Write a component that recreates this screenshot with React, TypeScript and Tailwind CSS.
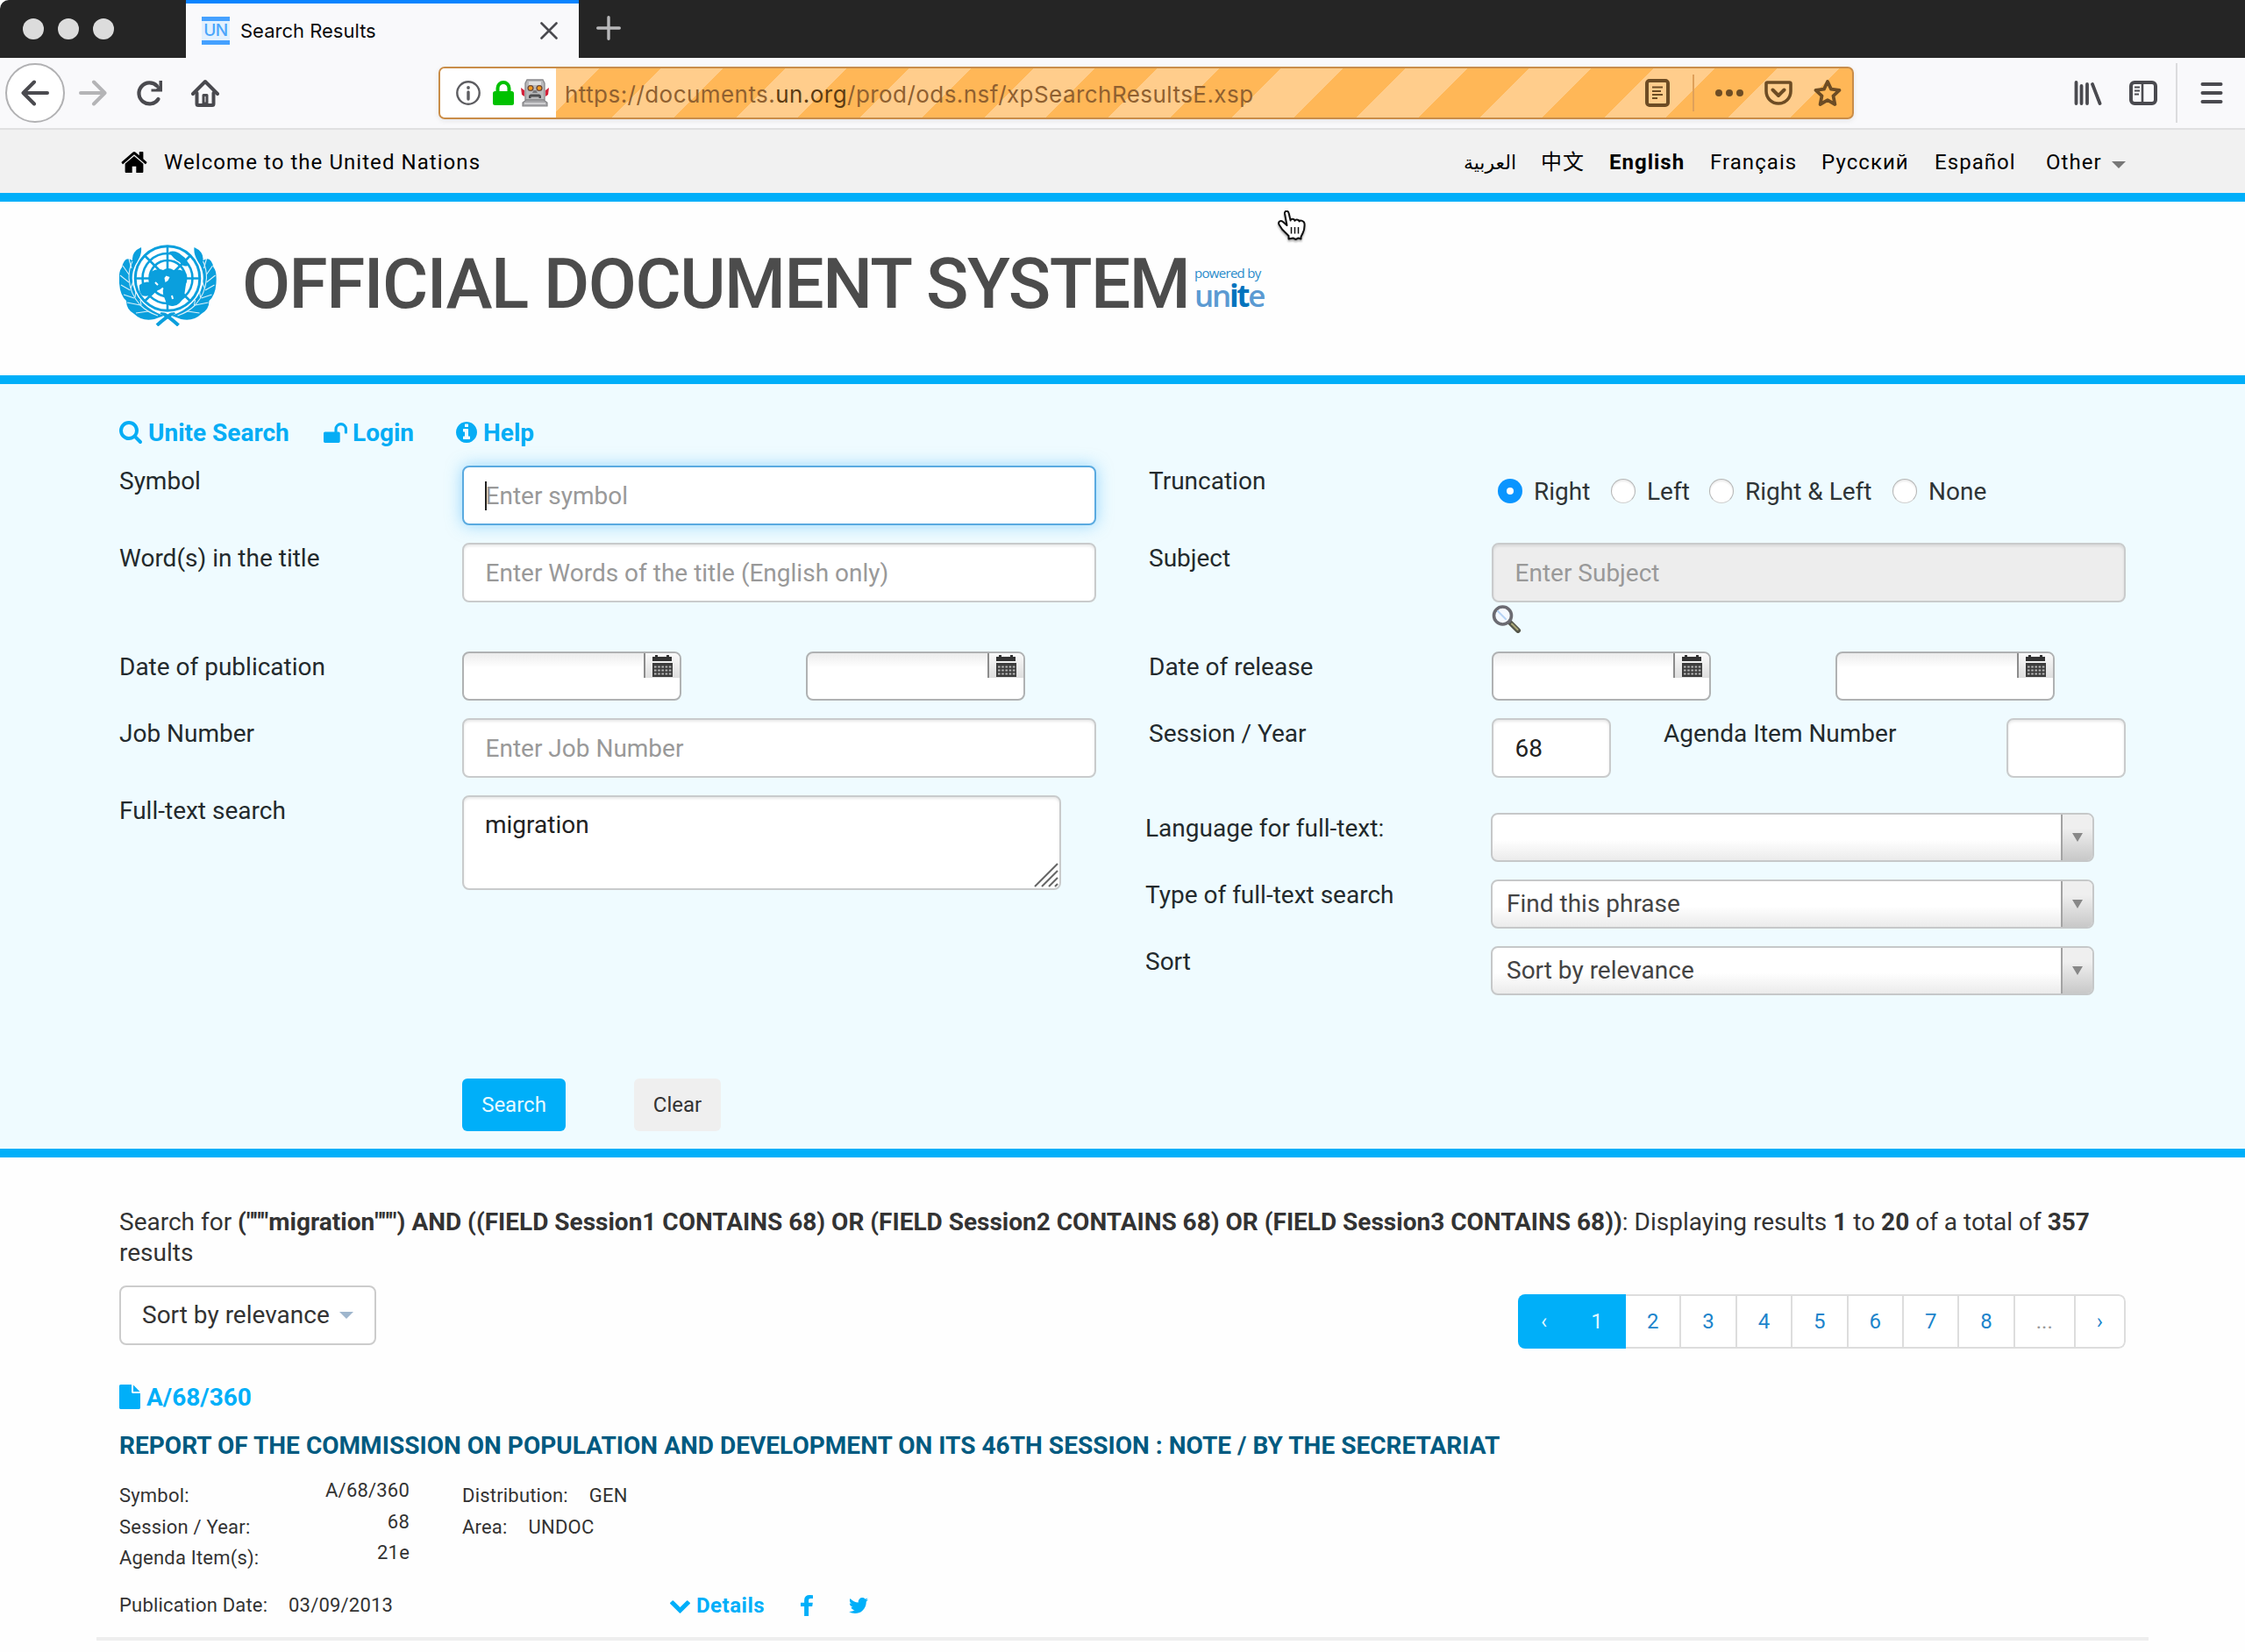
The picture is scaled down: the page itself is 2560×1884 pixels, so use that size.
import React from "react";

const P = {
  home: "M1472 992v480q0 26-19 45t-45 19h-384v-384h-256v384h-384q-26 0-45-19t-19-45v-480q0-1 .5-3t.5-3l575-474 575 474q1 2 1 6zm223-69l-62 74q-8 9-21 11h-3q-13 0-21-7l-692-577-692 577q-12 8-24 7-13-2-21-11l-62-74q-8-10-7-23.5t11-21.5l719-599q32-26 76-26t76 26l244 204v-195q0-14 9-23t23-9h192q14 0 23 9t9 23v408l219 182q10 8 11 21.5t-7 23.5z",
  search: "M1216 832q0-185-131.5-316.5t-316.5-131.5-316.5 131.5-131.5 316.5 131.5 316.5 316.5 131.5 316.5-131.5 131.5-316.5zm512 832q0 52-38 90t-90 38q-54 0-90-38l-343-342q-179 124-399 124-143 0-273.5-55.5t-225-150-150-225-55.5-273.5 55.5-273.5 150-225 225-150 273.5-55.5 273.5 55.5 225 150 150 225 55.5 273.5q0 220-124 399l343 343q37 37 37 90z",
  unlock: "M1728 576v256q0 26-19 45t-45 19h-64q-26 0-45-19t-19-45v-256q0-106-75-181t-181-75-181 75-75 181v192h96q40 0 68 28t28 68v576q0 40-28 68t-68 28h-960q-40 0-68-28t-28-68v-576q0-40 28-68t68-28h672v-192q0-185 131.5-316.5t316.5-131.5 316.5 131.5 131.5 316.5z",
  info: "M1152 1376v-160q0-14-9-23t-23-9h-96v-512q0-14-9-23t-23-9h-320q-14 0-23 9t-9 23v160q0 14 9 23t23 9h96v320h-96q-14 0-23 9t-9 23v160q0 14 9 23t23 9h448q14 0 23-9t9-23zm-128-896v-160q0-14-9-23t-23-9h-192q-14 0-23 9t-9 23v160q0 14 9 23t23 9h192q14 0 23-9t9-23zm640 416q0 209-103 385.5t-279.5 279.5-385.5 103-385.5-103-279.5-279.5-103-385.5 103-385.5 279.5-279.5 385.5-103 385.5 103 279.5 279.5 103 385.5z",
  chevron: "M1683 808l-742 741q-19 19-45 19t-45-19l-742-741q-19-19-19-45.5t19-45.5l166-165q19-19 45-19t45 19l531 531 531-531q19-19 45-19t45 19l166 165q19 19 19 45.5t-19 45.5z",
  facebook: "M1343 12v264h-157q-86 0-116 36t-30 108v189h293l-39 296h-254v759h-306v-759h-255v-296h255v-218q0-186 104-288.5t277-102.5q147 0 228 12z",
  twitter: "M1684 408q-67 98-162 167 1 14 1 42 0 130-38 259.5t-115.5 248.5-184.5 210.5-258 146-323 54.5q-271 0-496-145 35 4 78 4 225 0 401-138-105-2-188-64.5t-114-159.5q33 5 61 5 43 0 85-11-112-23-185.5-111.5t-73.5-205.5v-4q68 38 146 41-66-44-105-115t-39-154q0-88 44-163 121 149 294.5 238.5t371.5 99.5q-8-38-8-74 0-134 94.5-228.5t228.5-94.5q140 0 236 102 109-21 205-78-37 115-142 178 93-10 186-50z",
  file: "M1152 512v-472q22 14 36 28l408 408q14 14 28 36h-472zm-128 32q0 40 28 68t68 28h544v1056q0 40-28 68t-68 28h-1344q-40 0-68-28t-28-68v-1600q0-40 28-68t68-28h800v544z",
};

function Fa({ d, vb, className }: { d: string; vb: string; className: string }) {
  return (
    <svg viewBox={vb} className={"shrink-0 fill-current " + className} preserveAspectRatio="none">
      <path d={d} />
    </svg>
  );
}

function TabStrip() {
  return (
    <div className="flex h-[66px] rounded-tl-[10px] bg-[#252525]">
      <div className="flex w-[212px] items-center gap-4 pl-[26px]">
        {[0, 1, 2].map((i) => (
          <span key={i} className="size-6 rounded-full bg-[#dcdcdc]" />
        ))}
      </div>
      <div className="flex w-[448px] items-center border-t-4 border-t-[#0a84ff] bg-[#f9f9fb] pl-[18px]">
        <div className="flex h-8 w-8 flex-col items-center justify-center border-y-[5px] border-[#45a1ff] bg-[#e2f1fe] text-[19px] leading-[22px] font-medium text-[#4aa5fb] [font-family:Inter,sans-serif]">
          <span className="tracking-[-0.5px]">UN</span>
        </div>
        <span className="ml-3 w-[342px] text-[22px] text-[#0c0c0d] [font-family:Inter,sans-serif]">Search Results</span>
        <svg viewBox="0 0 20 20" className="size-5 stroke-[#4a4a4f]" strokeWidth="2.6" strokeLinecap="round">
          <path d="M1.5 1.5l17 17M18.5 1.5l-17 17" />
        </svg>
      </div>
      <div className="flex items-center pb-[2px] pl-5">
        <svg viewBox="0 0 28 28" className="size-7 stroke-[#b8b8ba]" strokeWidth="3.4" strokeLinecap="round">
          <path d="M14 1.7v24.6M1.7 14h24.6" />
        </svg>
      </div>
    </div>
  );
}

function Robot() {
  return (
    <svg viewBox="0 0 32 32" className="h-8 w-8">
      <path d="M0 10l4 3v7l-3-2zM32 10l-4 3v7l3-2z" fill="#d3203a" />
      <path d="M7 1h18l2 4v19H5V5z" fill="#b9b9bb" stroke="#8b8b8e" strokeWidth="1.4" />
      <path d="M9 3h14v4H9z" fill="#dededf" />
      <circle cx="11" cy="10.500" r="3.600" fill="#6d4a3a" />
      <circle cx="21" cy="10.500" r="3.600" fill="#6d4a3a" />
      <circle cx="11" cy="10.500" r="2.200" fill="#f39a1e" />
      <circle cx="21" cy="10.500" r="2.200" fill="#f39a1e" />
      <path d="M14.500 13h3l1.500 3h-6z" fill="#77777a" />
      <path d="M9 22v-3l2-1.500h10l2 1.500v3h-2.500v-1.500h-9V22z" fill="#4c4c4f" />
      <path d="M2 31v-4l4-3h20l4 3v4z" fill="#a5a5a8" stroke="#858588" strokeWidth="1.200" />
      <path d="M4 28h24" stroke="#dcdcde" strokeWidth="1.500" />
    </svg>
  );
}

function NavBar() {
  return (
    <div className="flex h-[82px] items-center border-b-2 border-[#e0e0e1] bg-[#f9f9fb]">
      <div className="flex w-[500px] items-center pl-[6px]">
        <span className="flex size-[68px] items-center justify-center rounded-full border-2 border-[#b1b1b3] bg-white">
          <svg viewBox="0 0 32 32" className="size-8 fill-none stroke-[#4a4a4f]" strokeWidth="4" strokeLinecap="round" strokeLinejoin="round">
            <path d="M30 16H3M15 3.500L2.500 16 15 28.500" />
          </svg>
        </span>
        <svg viewBox="0 0 32 32" className="ml-4 size-8 fill-none stroke-[#b4b4b6]" strokeWidth="4" strokeLinecap="round" strokeLinejoin="round">
          <path d="M2 16h27M17 3.500L29.500 16 17 28.500" />
        </svg>
        <svg viewBox="0 0 32 32" className="ml-8 size-8 fill-none stroke-[#4a4a4f]" strokeWidth="4.200" strokeLinecap="round">
          <path d="M26.500 23A12 12 0 1 1 25 8" />
          <path d="M31 2v12.500H18.500v-3h5.500l3.500-3.500V2z" fill="#4a4a4f" stroke="none" />
        </svg>
        <svg viewBox="0 0 32 32" className="ml-8 size-8 fill-none stroke-[#4a4a4f]" strokeWidth="4" strokeLinecap="round" strokeLinejoin="round">
          <path d="M2 17L16 3l14 14" />
          <path d="M6.500 16v12.500q0 1.500 1.500 1.500h16q1.500 0 1.500-1.500V16" />
          <path d="M14 28v-9.500h4V28z" strokeWidth="3" />
        </svg>
      </div>
      <div className="flex h-[60px] w-[1614px] items-center overflow-hidden rounded-[7px] border-2 border-[#c98d49] bg-[repeating-linear-gradient(-45deg,#ffb757_0_50px,#ffcd8c_50px_100px)] shadow-[0_2px_6px_rgba(0,0,0,0.08)]">
        <div className="flex h-full w-[132px] items-center bg-white pl-[18px]">
          <svg viewBox="0 0 28 28" className="size-7">
            <circle cx="14" cy="14" r="12.700" fill="none" stroke="#5d5d61" strokeWidth="2.400" />
            <circle cx="14" cy="8" r="1.900" fill="#5d5d61" />
            <path d="M14 13v8" stroke="#5d5d61" strokeWidth="3.400" strokeLinecap="round" />
          </svg>
          <svg viewBox="0 0 24 28" className="ml-[14px] h-7 w-6">
            <path d="M5.500 13V8.500a6.500 6.500 0 0 1 13 0V13" fill="none" stroke="#00c100" strokeWidth="4" />
            <rect y="12" width="24" height="16" rx="2.500" fill="#00c100" />
          </svg>
          <div className="ml-[8px]">
            <Robot />
          </div>
        </div>
        <span className="w-[1242px] pt-[2px] pl-[10px] text-[26px] tracking-[0.450px] whitespace-nowrap text-[#8f6030] [font-family:Inter,sans-serif]">
          https://documents.<span className="text-[#5b3a12]">un.org</span>/prod/ods.nsf/xpSearchResultsE.xsp
        </span>
        <svg viewBox="0 0 28 32" className="h-8 w-7 fill-none stroke-[#6d4c24]" strokeWidth="4">
          <rect x="2" y="2" width="24" height="28" rx="3" />
          <path d="M8 9.500h12M8 14h10M8 18h12M8 22h6" strokeWidth="2" />
        </svg>
        <span className="ml-[26px] h-[42px] w-[2px] bg-[#dfa05a]" />
        <svg viewBox="0 0 32 8" className="ml-[24px] h-2 w-8 fill-[#6d4c24]">
          <circle cx="4" cy="4" r="4" />
          <circle cx="16" cy="4" r="4" />
          <circle cx="28" cy="4" r="4" />
        </svg>
        <svg viewBox="0 0 32 28" className="ml-6 h-7 w-8 fill-none stroke-[#6d4c24]" strokeWidth="4" strokeLinecap="round" strokeLinejoin="round">
          <path d="M3.500 2h25q1.500 0 1.500 1.500V12a14 14 0 0 1-28 0V3.500Q2 2 3.500 2z" strokeWidth="3.600" />
          <path d="M9.500 10.500l6.500 6.500 6.500-6.500" />
        </svg>
        <svg viewBox="0 0 32 32" className="ml-6 size-8 fill-none stroke-[#6d4c24]" strokeWidth="3.800" strokeLinejoin="round">
          <path d="M16 3l4 8.600 9.500 1.200-7 6.500 1.900 9.700L16 24.200 7.600 29l1.900-9.700-7-6.500L12 11.600z" />
        </svg>
      </div>
      <svg viewBox="0 0 32 28" className="ml-[251px] h-7 w-8 fill-none stroke-[#4a4a4f]" strokeWidth="3.800" strokeLinecap="round">
        <path d="M2.500 2v24M8.500 6v20M15 4v22M21 4l8.500 22" />
      </svg>
      <svg viewBox="0 0 32 28" className="ml-[31px] h-7 w-8 fill-none stroke-[#4a4a4f]" strokeWidth="4">
        <rect x="2" y="2" width="28" height="24" rx="4" />
        <path d="M15 3v22" strokeWidth="2.600" />
        <path d="M6 7.500h6M6 11.500h6M6 15.500h5" strokeWidth="2" />
      </svg>
      <span className="ml-[21px] h-[68px] w-[2px] bg-[#dcdcde]" />
      <svg viewBox="0 0 26 24" className="ml-[26px] h-6 w-[26px] stroke-[#4a4a4f]" strokeWidth="4" strokeLinecap="round">
        <path d="M2.500 2h21M2.500 12h21M2.500 22h21" />
      </svg>
    </div>
  );
}

function WelcomeBar() {
  return (
    <div className="flex h-[82px] items-center border-b-[10px] border-[#00aff9] bg-[#f1f1f1] pt-[2px] pl-[136px] text-[24px] tracking-[1.06px] text-black">
      <Fa d={P.home} vb="64 250 1664 1286" className="ml-[2px] h-6 w-[30px]" />
      <span className="ml-[19px] w-[1482px]">Welcome to the United Nations</span>
      <span dir="rtl" className="mr-[2px] w-[60px] text-[22px] tracking-normal whitespace-nowrap [font-family:'DejaVu_Sans',sans-serif]">
        العربية
      </span>
      <span className="ml-[26px] w-[78px] tracking-[1px] [font-family:Roboto,'Noto_Sans_CJK_SC',sans-serif]">中文</span>
      <span className="w-[115px] font-bold tracking-[1px]">English</span>
      <span className="w-[127px]">Français</span>
      <span className="w-[129px]">Русский</span>
      <span className="w-[127px]">Español</span>
      <span className="w-[75px]">Other</span>
      <svg viewBox="0 0 16 8" className="mt-[6px] h-2 w-4 fill-[#777]">
        <path d="M0 0h16L8 8z" />
      </svg>
    </div>
  );
}

function Emblem() {
  const branch = (
    <g>
      <path
        d="M25 3Q14 8 15 18Q6 12 3 26Q-1 30 0 44Q1 58 8 64Q8 74 17 79Q26 88 40 85L51 81Q36 76 27 66Q13 52 15 34Q16 26 21 19Q26 10 25 3z"
        fill="#0a9fdd"
      />
      <g fill="none" stroke="#fff" strokeWidth="1.100" opacity="0.85">
        <path d="M15 19Q11 27 11 38Q12 56 24 69Q32 77 44 81" />
        <path d="M11 34L4 24M11 43L1 35M12.500 52L2 46M17 61L5 57M24 69L9 66M33 76L19 78M14 27L11 16" />
        <path d="M13 50L16 42M18 60L19 53M25 69L24 63" />
      </g>
      <path d="M63 77Q54 82 43 92" fill="none" stroke="#0a9fdd" strokeWidth="4" />
    </g>
  );
  return (
    <svg viewBox="0 0 111 93" className="h-[93px] w-[111px]">
      {branch}
      <g transform="translate(110.500 0) scale(-1 1)">{branch}</g>
      <circle cx="55" cy="38.500" r="39.500" fill="#fff" />
      <g fill="none" stroke="#0a9fdd" strokeWidth="2.600">
        <circle cx="55" cy="38.500" r="36.800" strokeWidth="3" />
        <circle cx="55" cy="38.500" r="28.500" />
        <circle cx="55" cy="38.500" r="20.500" />
        <path d="M55 2v73M18.500 38.500h73M29 12.500l52 52M81 12.500l-52 52" />
      </g>
      <g fill="#0a9fdd">
        <path d="M36 31q8-5 14-2q6-4 12 0q8-2 14 3q3 6 0 13l-2 14q-6 12-14 11q-6 0-8-8q-3-6-2-12l-6 2q-4 4-6-2q-4-6-2-19z" />
        <path d="M57 8q8-2 14 4q8 5 7 12q-5 2-9-4q-8-4-12-12zM23 46q6-5 12-3q7 2 5 10q-7 8-14 5q-4-5-3-12z" />
      </g>
      <path d="M51.500 38l2-2.500 4 1.500-2 4-3 2z" fill="#fff" />
      <path d="M47 52l3-2.500M60 58l1 4M41 43l3 3" stroke="#fff" strokeWidth="2" />
    </svg>
  );
}

function HandCursor() {
  return (
    <svg viewBox="0 0 32 36" className="absolute top-[10px] left-[1457px] h-9 w-8 drop-shadow-[0_2px_1px_rgba(0,0,0,0.35)]">
      <path
        d="M8 3.500C7.500 0 12 0 12.600 3l2 8.500c0-2.500 4.400-2.500 4.900.3 .5-2 4.600-1.800 5.100.7 1-1.800 5.600-.8 5.900 2.500 .3 4-.5 8-2 11l-2 4v2.500l-3-1-3 1.500-3-1.500-5 1v-3.500L5 21.500l-3.500-5.500c-1.500-3.500 2-5.200 4.500-3l4.500 4z"
        fill="#fff"
        stroke="#111"
        strokeWidth="2"
        strokeLinejoin="round"
      />
      <path d="M15.500 19v7.500M19.500 19v7.500M23.500 19v7.500" stroke="#111" strokeWidth="1.500" />
    </svg>
  );
}

function SiteHeader() {
  return (
    <header className="relative flex h-[208px] items-start border-b-[10px] border-[#00aff9] bg-[#fefefe] pl-[136px]">
      <div className="pt-[49px]">
        <Emblem />
      </div>
      <h1 className="mt-[54px] ml-[29px] w-[1086px] text-[80px] leading-[80px] font-medium tracking-[-1.500px] whitespace-nowrap text-[#4c4c4c]">
        OFFICIAL DOCUMENT SYSTEM
      </h1>
      <div className="mt-[72px] flex w-[78px] flex-col whitespace-nowrap [font-family:'Open_Sans',sans-serif]">
        <span className="text-[15px] leading-[18px] tracking-[-0.700px] text-[#2b8ccb]">powered by</span>
        <span className="text-[35px] leading-[34px] font-semibold tracking-[-2.300px] text-[#5b9ad2]">
          un<span className="font-bold text-[#0073bd]">it</span>e
        </span>
      </div>
      <HandCursor />
    </header>
  );
}

function Label({ children, className = "w-[391px]" }: { children: React.ReactNode; className?: string }) {
  return <label className={"shrink-0 leading-9 whitespace-nowrap text-[#232a2d] " + className}>{children}</label>;
}

function Field({ placeholder, value, className = "w-[723px] bg-white" }: { placeholder?: string; value?: string; className?: string }) {
  return (
    <input
      readOnly
      placeholder={placeholder}
      value={value ?? ""}
      className={
        "block h-[68px] rounded-lg border-2 border-[#c9cbcc] pl-[24.500px] text-[28px] text-[#222] shadow-[inset_0_2px_3px_rgba(0,0,0,0.09)] outline-none placeholder:text-[#999] " +
        className
      }
    />
  );
}

function DateBox() {
  return (
    <div className="h-14 w-[250px] overflow-hidden rounded-lg border-2 border-[#b0b2b3] bg-[linear-gradient(#ececec,#fff_16px)]">
      <div className="ml-auto flex h-[28px] w-[41px] border-l-2 border-[#8c8c8c] bg-[linear-gradient(#fafafa,#dedede)] pt-[2px] pl-[7px]">
        <svg viewBox="0 0 24 25" className="h-[25px] w-6">
          <path d="M1 2h3V0h3v2h10V0h3v2h3v5H1z" fill="#333" />
          <path d="M1 9h23v16H1z" fill="#3d3d3d" />
          <path d="M3 13.500h20M3 17.500h20M3 21.500h20" stroke="#b5b5b5" strokeWidth="2" strokeDasharray="2.600 1.600" />
        </svg>
      </div>
    </div>
  );
}

function Radio({ on, children, className }: { on?: boolean; children: React.ReactNode; className: string }) {
  return (
    <span className={"flex items-center gap-[13px] whitespace-nowrap text-[#2e3436] " + className}>
      {on ? (
        <span className="flex size-7 items-center justify-center rounded-full bg-[#0a95ff]">
          <span className="size-2 rounded-full bg-white" />
        </span>
      ) : (
        <span className="size-7 rounded-full border border-[#b4b4b4] border-b-[#cfcfcf] bg-white shadow-[inset_0_2px_2px_rgba(0,0,0,0.08)]" />
      )}
      <span className="pt-[2px]">{children}</span>
    </span>
  );
}

function Select({ children }: { children?: React.ReactNode }) {
  return (
    <div className="flex h-14 w-[688px] overflow-hidden rounded-lg border-2 border-[#c6c8c9] bg-[linear-gradient(#fff_55%,#ebebeb)] text-[#444]">
      <span className="w-[648px] pl-[16px] leading-[52px]">{children}</span>
      <span className="flex flex-1 items-center justify-center border-l-2 border-[#a3a3a3] bg-[linear-gradient(#efefef_30%,#c8c8c8)]">
        <svg viewBox="0 0 12 10" className="h-[10px] w-3 fill-[#888]">
          <path d="M0 0h12L6 10z" />
        </svg>
      </span>
    </div>
  );
}

function SearchPanel() {
  return (
    <section className="h-[882px] border-b-[10px] border-[#00aff9] bg-[#effbff] pt-[38px] pl-[136px] text-[28px]">
      <nav className="flex h-[34px] items-center leading-[34px] font-bold text-[#05adf5]">
        <Fa d={P.search} vb="64 128 1664 1664" className="h-[26px] w-[26px]" />
        <span className="ml-[7px] w-[200px] pt-[2px]">Unite Search</span>
        <Fa d={P.unlock} vb="64 128 1664 1408" className="h-[23px] w-[27px]" />
        <span className="ml-[6px] w-[118px] pt-[2px]">Login</span>
        <Fa d={P.info} vb="128 128 1536 1536" className="h-6 w-6" />
        <span className="ml-[7px] pt-[2px]">Help</span>
      </nav>
      <div className="mt-[21px] flex">
        <div className="w-[1174px]">
          <div className="flex h-[88px]">
            <Label>Symbol</Label>
            <div className="relative">
              <Field placeholder="Enter symbol" className="w-[723px] border-[#5aaae0]! bg-white shadow-[0_0_18px_rgba(60,180,250,0.5)]!" />
              <span className="absolute top-[18px] left-[26px] h-[33px] w-[2px] bg-[#222]" />
            </div>
          </div>
          <div className="flex h-[124px]">
            <Label>Word(s) in the title</Label>
            <Field placeholder="Enter Words of the title (English only)" />
          </div>
          <div className="flex h-[76px]">
            <Label>Date of publication</Label>
            <div className="w-[392px]">
              <DateBox />
            </div>
            <DateBox />
          </div>
          <div className="flex h-[88px]">
            <Label>Job Number</Label>
            <Field placeholder="Enter Job Number" />
          </div>
          <div className="flex">
            <Label>Full-text search</Label>
            <div className="relative h-[108px] w-[683px] rounded-lg border-2 border-[#c9cbcc] bg-white pt-[14px] pl-[24px] leading-9 text-[#222] shadow-[inset_0_2px_3px_rgba(0,0,0,0.09)]">
              migration
              <svg viewBox="0 0 28 28" className="absolute right-[1px] bottom-[1px] size-7 stroke-[#666]" strokeWidth="2">
                <path d="M1 27L27 1M9 27L27 9M17 27l10-10M24 27l3-3" />
              </svg>
            </div>
          </div>
        </div>
        <div className="w-[1114px]">
          <div className="flex h-[88px]">
            <Label className="w-[398px]">Truncation</Label>
            <div className="flex h-[58px] items-center">
              <Radio on className="w-[129px]">Right</Radio>
              <Radio className="w-[112px]">Left</Radio>
              <Radio className="w-[209px]">Right &amp; Left</Radio>
              <Radio className="w-[120px]">None</Radio>
            </div>
          </div>
          <div className="flex h-[124px]">
            <Label>Subject</Label>
            <div>
              <Field placeholder="Enter Subject" className="w-[723px] bg-[#ededed]" />
              <svg viewBox="0 0 34 32" className="mt-[3px] h-8 w-[34px] fill-none" strokeLinecap="round">
                <path d="M21 20l9 9" stroke="#55564a" strokeWidth="6" />
                <path d="M23 21.500l6.500 6.500" stroke="#a9a878" strokeWidth="2" />
                <circle cx="12.500" cy="12" r="10" fill="#f4f9ff" stroke="#6b6b72" strokeWidth="3.600" />
                <path d="M7 7l9 9" stroke="#b5d3f5" strokeWidth="2" />
              </svg>
            </div>
          </div>
          <div className="flex h-[76px]">
            <Label>Date of release</Label>
            <div className="w-[392px]">
              <DateBox />
            </div>
            <DateBox />
          </div>
          <div className="flex h-[108px]">
            <Label>Session / Year</Label>
            <Field value="68" className="w-[136px] bg-white" />
            <Label className="w-[391px] pl-[60px]">Agenda Item Number</Label>
            <div className="pl-[60px]">
              <Field className="w-[136px] bg-white" />
            </div>
          </div>
          <div className="-ml-1 flex flex-col gap-5">
            <div className="flex">
              <Label className="w-[394px]">Language for full-text:</Label>
              <Select />
            </div>
            <div className="flex">
              <Label className="w-[394px]">Type of full-text search</Label>
              <Select>Find this phrase</Select>
            </div>
            <div className="flex">
              <Label className="w-[394px]">Sort</Label>
              <Select>Sort by relevance</Select>
            </div>
          </div>
        </div>
      </div>
      <div className="mt-[95px] flex gap-[78px] pl-[391px] text-[24px]">
        <button className="h-[60px] w-[118px] rounded-md bg-[#00aff9] text-[#e6faff]">Search</button>
        <button className="h-[60px] w-[99px] rounded-md bg-[#efefef] text-[#333]">Clear</button>
      </div>
    </section>
  );
}

function Pagination() {
  const cell = "flex h-full items-center justify-center border-r-2 border-[#ddd]";
  return (
    <div className="mt-[10px] flex h-[62px] w-[693px] overflow-hidden rounded-lg text-[24px] text-[#1c84cb]">
      <div className="flex w-[123px] items-center bg-[#00aff9] text-[#dff6ff]">
        <span className="w-[59px] text-center">‹</span>
        <span className="w-[62px] text-center">1</span>
      </div>
      <div className="flex flex-1 rounded-r-lg border-y-2 border-r-2 border-[#ddd] bg-white">
        {[2, 3, 4, 5, 6, 7, 8].map((n) => (
          <span key={n} className={cell + " w-[63.400px]"}>{n}</span>
        ))}
        <span className={cell + " w-[69px] text-[#999]"}>...</span>
        <span className="flex flex-1 items-center justify-center">›</span>
      </div>
    </div>
  );
}

function Results() {
  return (
    <main className="px-[136px] pt-[56px] text-[28px] text-[#333]">
      <p className="w-[2288px] leading-[35px]">
        Search for{" "}
        <b>
          (<span className="tracking-[0.100px]">"""</span>migration<span className="tracking-[0.100px]">"""</span>) AND ((FIELD Session1 CONTAINS 68) OR (FIELD
          Session2 CONTAINS 68) OR (FIELD Session3 CONTAINS 68))
        </b>
        : Displaying results <b>1</b> to <b>20</b> of a total of <b>357</b>
        <br />
        results
      </p>
      <div className="mt-5 flex items-start justify-between">
        <div className="flex h-[68px] w-[293px] items-center rounded-lg border-2 border-[#ccc] bg-white pl-[24px]">
          <span className="w-[225px] whitespace-nowrap">Sort by relevance</span>
          <svg viewBox="0 0 16 8" className="h-2 w-4 fill-[#9fb6cd]">
            <path d="M0 0h16L8 8z" />
          </svg>
        </div>
        <Pagination />
      </div>
      <div className="mt-[38px] flex h-[34px] items-center font-bold text-[#00aff9]">
        <Fa d={P.file} vb="128 0 1536 1792" className="h-7 w-6" />
        <span className="ml-[7px] pt-[1px]">A/68/360</span>
      </div>
      <h2 className="mt-[22px] leading-[34px] font-bold tracking-[0.030px] whitespace-nowrap text-[#005a80]">
        REPORT OF THE COMMISSION ON POPULATION AND DEVELOPMENT ON ITS 46TH SESSION : NOTE / BY THE SECRETARIAT
      </h2>
      <div className="mt-4 flex h-[130px] text-[22px] leading-[35.500px] tracking-[0.200px]">
        <div className="w-[181px] pt-[6px]">
          <div>Symbol:</div>
          <div>Session / Year:</div>
          <div>Agenda Item(s):</div>
        </div>
        <div className="w-[150px] text-right">
          <div>A/68/360</div>
          <div>68</div>
          <div>21e</div>
        </div>
        <div className="pt-[6px] pl-[60px]">
          <div className="flex gap-6"><span>Distribution:</span><span>GEN</span></div>
          <div className="flex gap-6"><span>Area:</span><span>UNDOC</span></div>
        </div>
      </div>
      <div className="flex h-[36px] items-center pt-[1px] text-[22px] tracking-[0.200px]">
        <span className="w-[193px]">Publication Date:</span>
        <span className="w-[435px]">03/09/2013</span>
        <Fa d={P.chevron} vb="90 520 1612 1060" className="mt-[4px] h-[15px] w-[23px] text-[#00aff9]" />
        <span className="ml-[7px] w-[119px] text-[24px] font-bold tracking-[0.500px] text-[#00aff9]">Details</span>
        <Fa d={P.facebook} vb="479 0 864 1664" className="h-6 w-[14px] text-[#00aff9]" />
        <Fa d={P.twitter} vb="108 250 1576 1290" className="ml-[41px] h-[18px] w-[22px] text-[#00aff9]" />
      </div>
      <div className="-mx-[26px] mt-[19px] h-1 bg-[#eeeeee]" />
    </main>
  );
}

export default function App() {
  return (
    <div className="h-[1884px] w-[2560px] overflow-hidden bg-[#fefefe] [font-family:Roboto,sans-serif]">
      <TabStrip />
      <NavBar />
      <WelcomeBar />
      <SiteHeader />
      <SearchPanel />
      <Results />
    </div>
  );
}
